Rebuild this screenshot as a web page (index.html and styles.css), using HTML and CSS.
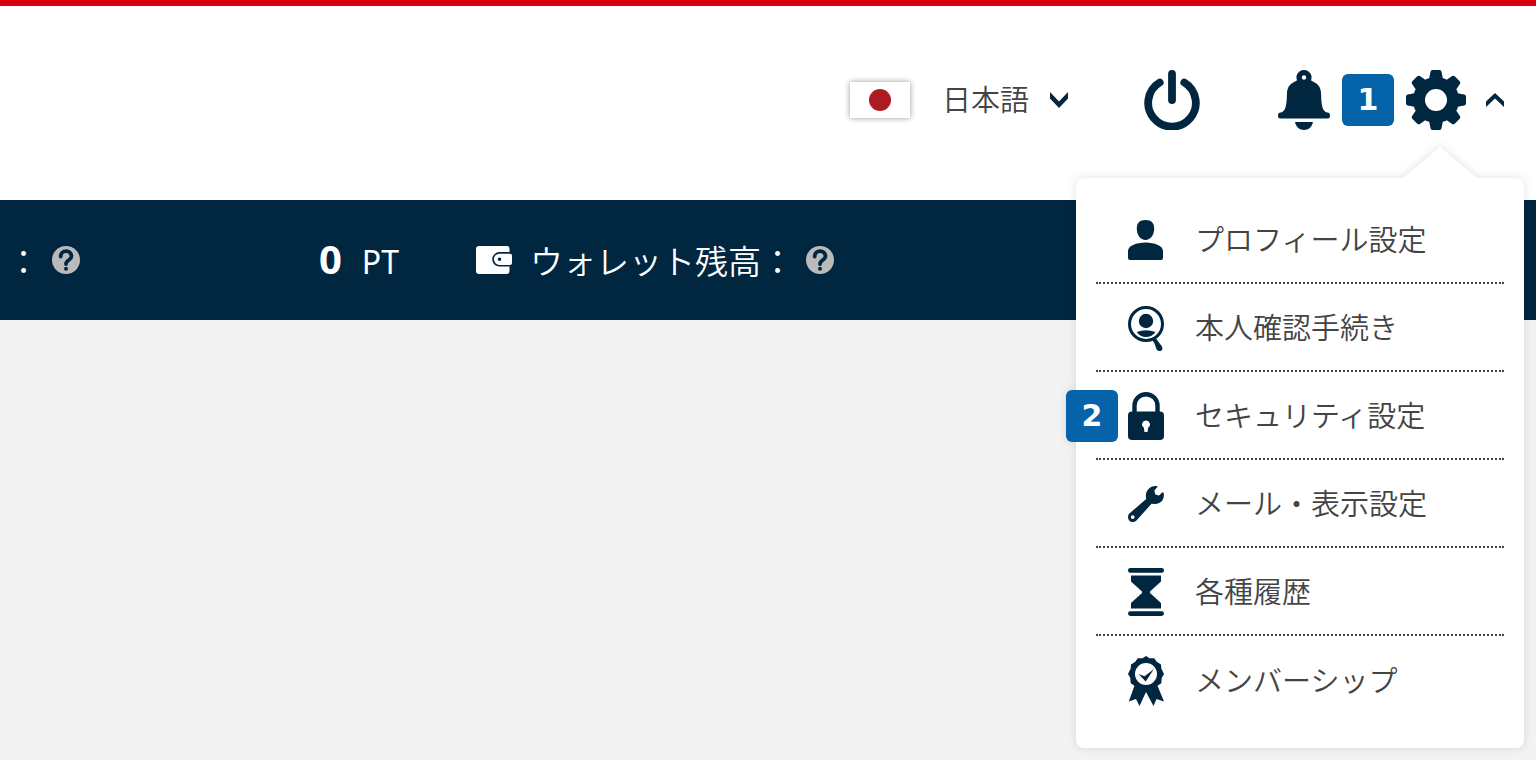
FILE: index.html
```html
<!DOCTYPE html>
<html lang="ja">
<head>
<meta charset="utf-8">
<meta name="viewport" content="width=device-width, initial-scale=1">
<title>アカウント</title>
<link rel="stylesheet" href="styles.css">
</head>
<body>
<header class="header">
  <button class="language" type="button">
    <span class="flag"><svg width="60" height="36" viewBox="0 0 60 36" aria-hidden="true"><circle cx="30" cy="18" r="11"/></svg></span>
    <span class="language-name">日本語</span>
    <svg width="18" height="16" viewBox="0 0 18 16" aria-hidden="true"><path d="M0 0 9 9.500 18 0V6.500L9 16 0 6.500Z"/></svg>
  </button>
  <button class="icon-button power" type="button" aria-label="ログアウト">
    <svg width="56" height="60" viewBox="0 0 56 60" aria-hidden="true"><path d="M15.700 12.500A23.800 23.800 0 1 0 40.300 12.500M28 4V30" fill="none" stroke="#002640" stroke-width="7.800" stroke-linecap="round"/></svg>
  </button>
  <div class="tools">
    <button class="icon-button" type="button" aria-label="お知らせ">
      <svg width="52" height="60" viewBox="0 0 52 60" aria-hidden="true"><path fill-rule="evenodd" d="M26 0a7.300 7.300 0 0 1 7.200 9.500L33.500 11c6 2 9.300 6 9.500 12l.3 7c.5 7 2 12 6.200 12.600 1.700.2 2.500 1 2.500 3s-.8 3-2 3H2c-1.200 0-2-1-2-3s.8-2.800 2.500-3c4.200-.6 5.700-5.600 6.200-12.600L9 23c.2-6 3.500-10 9.500-12l.3-1.500A7.300 7.300 0 0 1 26 0Zm0 5.300a2.200 2.200 0 1 0 0 4.400 2.200 2.200 0 0 0 0-4.400Z"/><path d="M17 52h18c-1 5-4.500 8-9 8s-8-3-9-8Z"/></svg>
    </button>
    <span class="step">1</span>
    <div class="settings">
      <button class="settings-toggle" type="button" aria-label="設定" aria-expanded="true">
        <svg width="60" height="60" viewBox="0 0 60 60" aria-hidden="true">
          <defs><path id="tooth" d="M26.500 0h7q1.700 0 2 1.700L37.300 11H22.700L24.500 1.700Q24.800 0 26.500 0Z"/></defs>
          <circle cx="30" cy="30" r="17" fill="none" stroke="#002640" stroke-width="12"/>
          <use href="#tooth"/><use href="#tooth" transform="rotate(45 30 30)"/><use href="#tooth" transform="rotate(90 30 30)"/><use href="#tooth" transform="rotate(135 30 30)"/><use href="#tooth" transform="rotate(180 30 30)"/><use href="#tooth" transform="rotate(225 30 30)"/><use href="#tooth" transform="rotate(270 30 30)"/><use href="#tooth" transform="rotate(315 30 30)"/>
        </svg>
        <svg width="18" height="14" viewBox="0 0 18 14" aria-hidden="true"><path d="M0 14V8.500L9 0l9 8.500V14L9 5.500Z"/></svg>
      </button>
      <nav class="menu" aria-label="設定メニュー">
        <a class="menu-item" href="#profile"><span class="menu-icon"><svg width="36" height="40" viewBox="0 0 36 40" aria-hidden="true"><path d="M17.500 0c6 0 8.700 3 8.700 8.500C26.200 15 22.500 20 17.500 20S8.800 15 8.800 8.500C8.800 3 11.500 0 17.500 0ZM17.500 22.500C27 22.500 35 26 35 31v7q0 2-2 2H2q-2 0-2-2v-7c0-5 8-8.500 17.500-8.500Z"/></svg></span>プロフィール設定</a>
        <a class="menu-item" href="#identity"><span class="menu-icon"><svg width="36" height="45" viewBox="0 0 36 45" aria-hidden="true"><circle cx="18" cy="18" r="16.500" fill="none" stroke="#002640" stroke-width="3"/><circle cx="18" cy="15" r="7.200"/><path d="M8.700 26Q18 22.500 27.500 26 24 31 18 31T8.700 26ZM24.500 34.500l3.500-2 2 2.700 3.500 4.500q2 3.500-.3 5-2.800 1.400-4.700-1.400L26.500 37.500Z"/></svg></span>本人確認手続き</a>
        <a class="menu-item" href="#security"><span class="step step-menu">2</span><span class="menu-icon"><svg width="36" height="48" viewBox="0 0 36 48" aria-hidden="true"><path d="M6.500 22V13.500a11.500 11.300 0 0 1 23 0V22" fill="none" stroke="#002640" stroke-width="4.400"/><path fill-rule="evenodd" d="M4 19.500h28q4 0 4 4V44q0 4-4 4H4q-4 0-4-4V23.500q0-4 4-4Zm14 9a3.800 3.800 0 0 0-2.200 7l.7 4.500h3l.7-4.500a3.800 3.800 0 0 0-2.200-7Z"/></svg></span>セキュリティ設定</a>
        <a class="menu-item" href="#display"><span class="menu-icon"><svg width="36" height="36" viewBox="0 0 36 36" aria-hidden="true"><path fill-rule="evenodd" d="M29.500 1 26.300 4.500 27.300 8.500 31 9.600 34.500 6.300Q35.300 5.800 35.600 7C37 13 33 18 27 18L23.500 17.800 8.700 34.300C6 37 2 36.500.6 33.500-.6 31 .2 28.600 2 27L18.200 13C16.500 6 21 0 27.500 0Q29.800 0 29.500 1ZM4.700 29.200a1.900 1.900 0 1 0 0 3.800 1.900 1.900 0 0 0 0-3.800Z"/></svg></span>メール・表示設定</a>
        <a class="menu-item" href="#history"><span class="menu-icon"><svg width="36" height="48" viewBox="0 0 36 48" aria-hidden="true"><rect width="36" height="4.800" rx="2.400"/><path d="M3 7.500H33V13.500L22 23.500V25L33 35V40.500H3V35L14 25V23.500L3 13.500Z"/><rect y="43.200" width="36" height="4.800" rx="2.400"/></svg></span>各種履歴</a>
        <a class="menu-item" href="#membership"><span class="menu-icon"><svg width="36" height="50" viewBox="0 0 36 50" aria-hidden="true"><path fill-rule="evenodd" d="M18 0 21.500 2.300 26.300 2.200 28.700 5.700 33 8.500 33.300 12.500 36 18 33.700 22 33.300 27.200 29.500 29.700 30 31 36 45.500 28.500 43 25.500 50 18 36 11.500 50 8 43 .8 45.500 6 31 6.500 29.700 2.700 27.200 2.300 22 0 18 2.700 12.500 3 8.500 7.300 5.700 9.700 2.200 14.500 2.300ZM18 7a11 11 0 1 0 0 22 11 11 0 0 0 0-22Z"/><path d="M10.500 18 16.500 20.200 25.800 13.300 17.700 25.500Z"/></svg></span>メンバーシップ</a>
      </nav>
    </div>
  </div>
</header>
<section class="balance" aria-label="残高">
  <div class="balance-label"><span>：</span>
    <button class="icon-button" type="button" aria-label="ポイントのヘルプ"><svg width="28" height="28" viewBox="0 0 28 28" aria-hidden="true"><circle cx="14" cy="14" r="14" fill="#bababa"/><path d="M8.700 10.500C8.700 3.500 19.500 3.500 19.500 10.300 19.500 14 14 14 14 18" fill="none" stroke="#002640" stroke-width="3.800" stroke-linecap="round"/><circle cx="14" cy="22.700" r="2"/></svg></button>
  </div>
  <div class="points"><strong class="points-value">0</strong><span>PT</span></div>
  <div class="balance-label wallet">
    <svg class="wallet-icon" width="36" height="28" viewBox="0 0 36 28" aria-hidden="true"><path fill="#fff" fill-rule="evenodd" d="M3 0H31q2.500 0 2.500 2.500V6H23.500a7.300 7.300 0 0 0 0 14.600H33.500V25q0 3-3 3H3q-3 0-3-3V3q0-3 3-3ZM23.500 7.700H34q2 0 2 2v7.200q0 2-2 2H23.500a5.600 5.600 0 0 1 0-11.200Zm0 3.800a1.800 1.800 0 1 0 0 3.600 1.800 1.800 0 0 0 0-3.600Z"/></svg>
    <span>ウォレット残高：</span>
    <button class="icon-button" type="button" aria-label="ウォレットのヘルプ"><svg width="28" height="28" viewBox="0 0 28 28" aria-hidden="true"><circle cx="14" cy="14" r="14" fill="#bababa"/><path d="M8.700 10.500C8.700 3.500 19.500 3.500 19.500 10.300 19.500 14 14 14 14 18" fill="none" stroke="#002640" stroke-width="3.800" stroke-linecap="round"/><circle cx="14" cy="22.700" r="2"/></svg></button>
  </div>
</section>
</body>
</html>
```
FILE: styles.css
```css
* { box-sizing: border-box; }

body {
  min-height: 100vh;
  margin: 0;
  background: #f3f3f3;
  color: #444;
  font-family: "Noto Sans CJK JP", sans-serif;
  font-weight: 350;
}

svg { display: block; flex: none; fill: #002640; }

button {
  padding: 0;
  border: 0;
  background: none;
  color: inherit;
  font: inherit;
  cursor: pointer;
}

.header {
  display: flex;
  justify-content: flex-end;
  align-items: center;
  padding: 64px 32px 70px;
  border-top: 6px solid #d7000f;
  background: #fff;
}

.language {
  display: flex;
  align-items: center;
  margin-right: 76px;
  font-size: 29px;
  line-height: 36px;
}

.flag {
  margin-right: 32px;
  background: #fff;
  box-shadow: 0 0 6px rgba(0, 0, 0, .4);
}

.flag svg { fill: #ad1c22; }

.language-name {
  margin-right: 21px;
  padding-bottom: 4px;
}

.power { margin-right: 78px; }

.tools {
  display: flex;
  align-items: center;
  gap: 12px;
}

.step {
  width: 52px;
  border-radius: 6px;
  background: #0563a9;
  color: #fff;
  font: bold 30px/52px "DejaVu Sans", sans-serif;
  text-align: center;
}

.settings { position: relative; }

.settings-toggle {
  display: flex;
  align-items: center;
  gap: 20px;
}

.menu {
  position: absolute;
  z-index: 1;
  top: 108px;
  right: -20px;
  width: 448px;
  padding: 18px 20px 24px;
  border-radius: 8px;
  background: #fff;
  filter: drop-shadow(0 0 5px rgba(0, 0, 0, .12));
}

.menu::before {
  content: "";
  position: absolute;
  right: 47px;
  bottom: 100%;
  width: 74px;
  height: 31px;
  background: #fff;
  clip-path: polygon(50% 0, 100% 100%, 0 100%);
}

.menu-item {
  position: relative;
  display: flex;
  align-items: center;
  height: 88px;
  padding: 0 0 2px 32px;
  border-bottom: 2px dotted #444;
  color: #444;
  font-size: 29px;
  line-height: 48px;
  text-decoration: none;
}

.menu-item:last-child { border-bottom: 0; }

.menu-icon {
  width: 36px;
  margin-right: 31px;
  padding-top: 4px;
}

.step-menu {
  position: absolute;
  left: -30px;
  margin-top: 4px;
}

.balance {
  display: flex;
  align-items: center;
  height: 120px;
  padding-left: 7px;
  background: #002640;
  color: #fff;
  font-size: 33px;
  line-height: 48px;
}

.balance-label {
  display: flex;
  align-items: center;
  gap: 12px;
}

.points {
  display: flex;
  align-items: baseline;
  justify-content: flex-end;
  gap: 20px;
  width: 319px;
  font-family: "Noto Sans", sans-serif;
  font-size: 32px;
  font-weight: 400;
}

.points-value {
  font-size: 40px;
  font-weight: 700;
}

.wallet { margin-left: 77px; }

.wallet-icon { margin-right: 6px; }
```
